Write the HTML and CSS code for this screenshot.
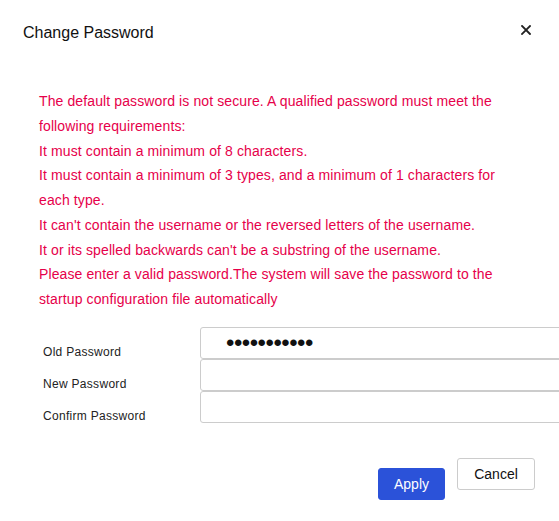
FILE: index.html
```html
<!DOCTYPE html>
<html>
<head>
    <title>Change Password</title>
    <link rel="stylesheet" href="styles.css">
</head>
<body>
    <div class="dialog">
        <div class="dialog-header">
            <span class="dialog-title">Change Password</span>
            <button class="close-btn" aria-label="Close">
                <svg width="10" height="10" viewBox="0 0 10 10">
                    <path d="M1 1L9 9M9 1L1 9" stroke="#222" stroke-width="1.8" stroke-linecap="square" />
                </svg>
            </button>
        </div>

        <div class="notice">
            <p>The default password is not secure. A qualified password must meet the following requirements:</p>
            <p>It must contain a minimum of 8 characters.</p>
            <p>It must contain a minimum of 3 types, and a minimum of 1 characters for each type.</p>
            <p>It can't contain the username or the reversed letters of the username.</p>
            <p>It or its spelled backwards can't be a substring of the username.</p>
            <p>Please enter a valid password.The system will save the password to the startup configuration file automatically</p>
        </div>

        <form class="pwd-form">
            <label for="oldPwd">Old Password</label>
            <input type="password" id="oldPwd" value="aaaaaaaaaaa" />
            <label for="newPwd">New Password</label>
            <input type="password" id="newPwd" />
            <label for="confirmPwd">Confirm Password</label>
            <input type="password" id="confirmPwd" />
        </form>

        <div class="dialog-footer">
            <button class="btn btn-primary">Apply</button>
            <button class="btn btn-default">Cancel</button>
        </div>
    </div>
</body>
</html>
```

FILE: styles.css
```css
body {
    margin: 0;
    background: #fff;
    font-family: "Liberation Sans", Arial, sans-serif;
    color: #222;
}
.dialog {
    width: 559px;
    height: 521px;
    overflow: hidden;
    background: #fff;
}
.dialog-header {
    display: flex;
    justify-content: space-between;
    align-items: center;
    padding: 23px 28px 0 23px;
    height: 20px;
}
.dialog-title {
    font-size: 16px;
    line-height: 20px;
    color: #111;
}
.close-btn {
    background: none;
    border: none;
    padding: 0;
    margin-top: -6px;
    cursor: pointer;
    line-height: 0;
}
.notice {
    margin: 46px 50px 0 39px;
    color: #e6004a;
    font-size: 14px;
    line-height: 24.75px;
    letter-spacing: 0.11px;
}
.notice p {
    margin: 0;
}
.pwd-form {
    display: grid;
    grid-template-columns: 157px 380px;
    margin: 15px 0 0 43px;
}
.pwd-form label {
    font-size: 12px;
    color: #222;
    align-self: end;
    padding-bottom: 0;
    line-height: 14px;
    letter-spacing: 0.3px;
}
.pwd-form input {
    height: 32px;
    box-sizing: border-box;
    border: 1px solid #ccc;
    border-radius: 3px;
    padding: 0 0 0 25px;
    font-size: 24px;
    font-family: "Liberation Sans", Arial, sans-serif;
    color: #111;
    letter-spacing: -0.5px;
    outline: none;
}
.dialog-footer {
    display: flex;
    justify-content: flex-end;
    align-items: flex-start;
    gap: 12px;
    padding: 35px 24px 0 0;
}
.btn {
    height: 32px;
    border-radius: 3px;
    font-size: 14px;
    font-family: "Liberation Sans", Arial, sans-serif;
    cursor: pointer;
}
.btn-primary {
    width: 67px;
    margin-top: 10px;
    background: #2b52d9;
    border: 1px solid #2b52d9;
    color: #fff;
}
.btn-default {
    width: 78px;
    background: #fff;
    border: 1px solid #ccc;
    color: #111;
}
```
